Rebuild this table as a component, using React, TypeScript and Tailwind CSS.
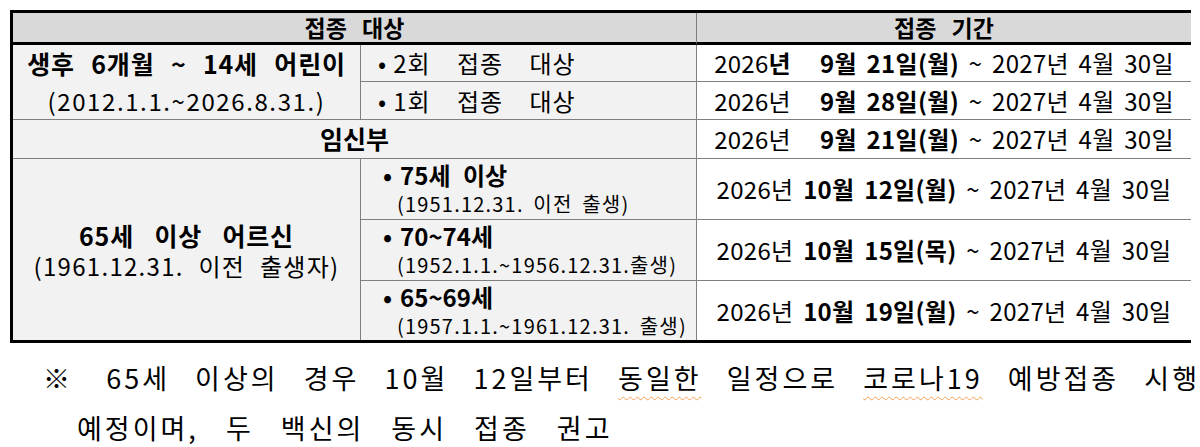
const font = { fontFamily: '"Noto Sans CJK KR", "Noto Sans", sans-serif' };

function Period({ start, bold, boldYear }: { start: string; bold: string; boldYear?: boolean }) {
  return (
    <div className="flex h-full items-center justify-center whitespace-pre text-[24px] leading-none tracking-[0.3px] text-black [word-spacing:4px]">
      <span>2026</span>
      <span className={boldYear ? 'font-bold' : ''}>년</span>
      <span>{start}</span>
      <span className="font-bold">{bold}</span>
      <span> ~ 2027년 4월 30일</span>
    </div>
  );
}

function Group({ title, range }: { title: string; range: string }) {
  return (
    <div className="pl-[22px] text-black">
      <div className="text-[24px] font-bold leading-[30px] [word-spacing:7px]">
        •<span className="ml-[8px]">{title}</span>
      </div>
      <div className="pl-[14px] text-[20px] leading-[28px] tracking-[1.2px] [word-spacing:4px]">{range}</div>
    </div>
  );
}

export default function App() {
  const thin = 'border-[#7f7f7f]';
  return (
    <div className="h-[447px] w-[1200px] overflow-hidden bg-white pl-[10px] pt-[10px]" style={font}>
      <div className="grid w-[1181px] grid-cols-[348px_336px_494px] grid-rows-[32px_37px_38px_39px_61px_61px_59px] border-b-[3px] border-l-[3px] border-t-[3px] border-black">
        {/* header */}
        <div className={`col-span-2 flex items-center justify-center border-b-[3px] border-r border-b-black ${thin} bg-[#d9d9d9] text-[23px] font-bold [word-spacing:10px]`}>
          접종 대상
        </div>
        <div className="flex items-center justify-center border-b-[3px] border-black bg-[#d9d9d9] text-[23px] font-bold [word-spacing:10px]">
          접종 기간
        </div>

        {/* children */}
        <div className={`row-span-2 flex flex-col items-center justify-center border-b border-r ${thin} bg-[#f2f2f2] text-black`}>
          <div className="text-[25px] font-bold leading-[37px] tracking-[0.8px] [word-spacing:10px]">생후 6개월 ~ 14세 어린이</div>
          <div className="text-[24px] leading-[37px] tracking-[1.6px]">(2012.1.1.~2026.8.31.)</div>
        </div>
        <div className={`flex items-center border-b border-r ${thin} bg-[#f2f2f2] pl-[17px] text-[24px] tracking-[1px] [word-spacing:20px]`}>
          •<span className="ml-[6px]">2회 접종 대상</span>
        </div>
        <div className={`border-b ${thin}`}>
          <Period start="   " bold="9월 21일(월)" boldYear />
        </div>
        <div className={`flex items-center border-b border-r ${thin} bg-[#f2f2f2] pl-[17px] text-[24px] tracking-[1px] [word-spacing:20px]`}>
          •<span className="ml-[6px]">1회 접종 대상</span>
        </div>
        <div className={`border-b ${thin}`}>
          <Period start="   " bold="9월 28일(월)" />
        </div>

        {/* pregnant */}
        <div className={`col-span-2 flex items-center justify-center border-b border-r ${thin} bg-[#f2f2f2] text-[25px] font-bold`}>
          임신부
        </div>
        <div className={`border-b ${thin}`}>
          <Period start="   " bold="9월 21일(월)" />
        </div>

        {/* seniors */}
        <div className={`row-span-3 flex flex-col items-center justify-center border-r ${thin} bg-[#f2f2f2] text-black`}>
          <div className="text-[25px] font-bold leading-[30px] tracking-[0.8px] [word-spacing:14px]">65세 이상 어르신</div>
          <div className="mt-[1px] text-[24px] leading-[29px] tracking-[1.3px] [word-spacing:8px]">(1961.12.31. 이전 출생자)</div>
        </div>
        <div className={`flex items-center border-b border-r ${thin} bg-[#f2f2f2]`}>
          <Group title="75세 이상" range="(1951.12.31. 이전 출생)" />
        </div>
        <div className={`border-b ${thin}`}>
          <Period start=" " bold="10월 12일(월)" />
        </div>
        <div className={`flex items-center border-b border-r ${thin} bg-[#f2f2f2]`}>
          <Group title="70~74세" range="(1952.1.1.~1956.12.31.출생)" />
        </div>
        <div className={`border-b ${thin}`}>
          <Period start=" " bold="10월 15일(목)" />
        </div>
        <div className={`flex items-center border-r ${thin} bg-[#f2f2f2]`}>
          <Group title="65~69세" range="(1957.1.1.~1961.12.31. 출생)" />
        </div>
        <div>
          <Period start=" " bold="10월 19일(월)" />
        </div>
      </div>

      {/* note */}
      <div className="mt-[10px] text-[27px] tracking-[3px] text-black break-keep">
        <div className="w-[1190px] pl-[33px] text-justify leading-[50px] [text-align-last:justify] [word-spacing:8px]">
          ※ 65세 이상의 경우 10월 12일부터{' '}
          <span className="underline decoration-[#f0a050] decoration-wavy decoration-1 underline-offset-[7px]">동일한</span>{' '}
          일정으로{' '}
          <span className="underline decoration-[#f0a050] decoration-wavy decoration-1 underline-offset-[7px]">코로나19</span>{' '}
          예방접종 시행
        </div>
        <div className="pl-[67px] leading-[50px] [word-spacing:18px]">예정이며, 두 백신의 동시 접종 권고</div>
      </div>
    </div>
  );
}
